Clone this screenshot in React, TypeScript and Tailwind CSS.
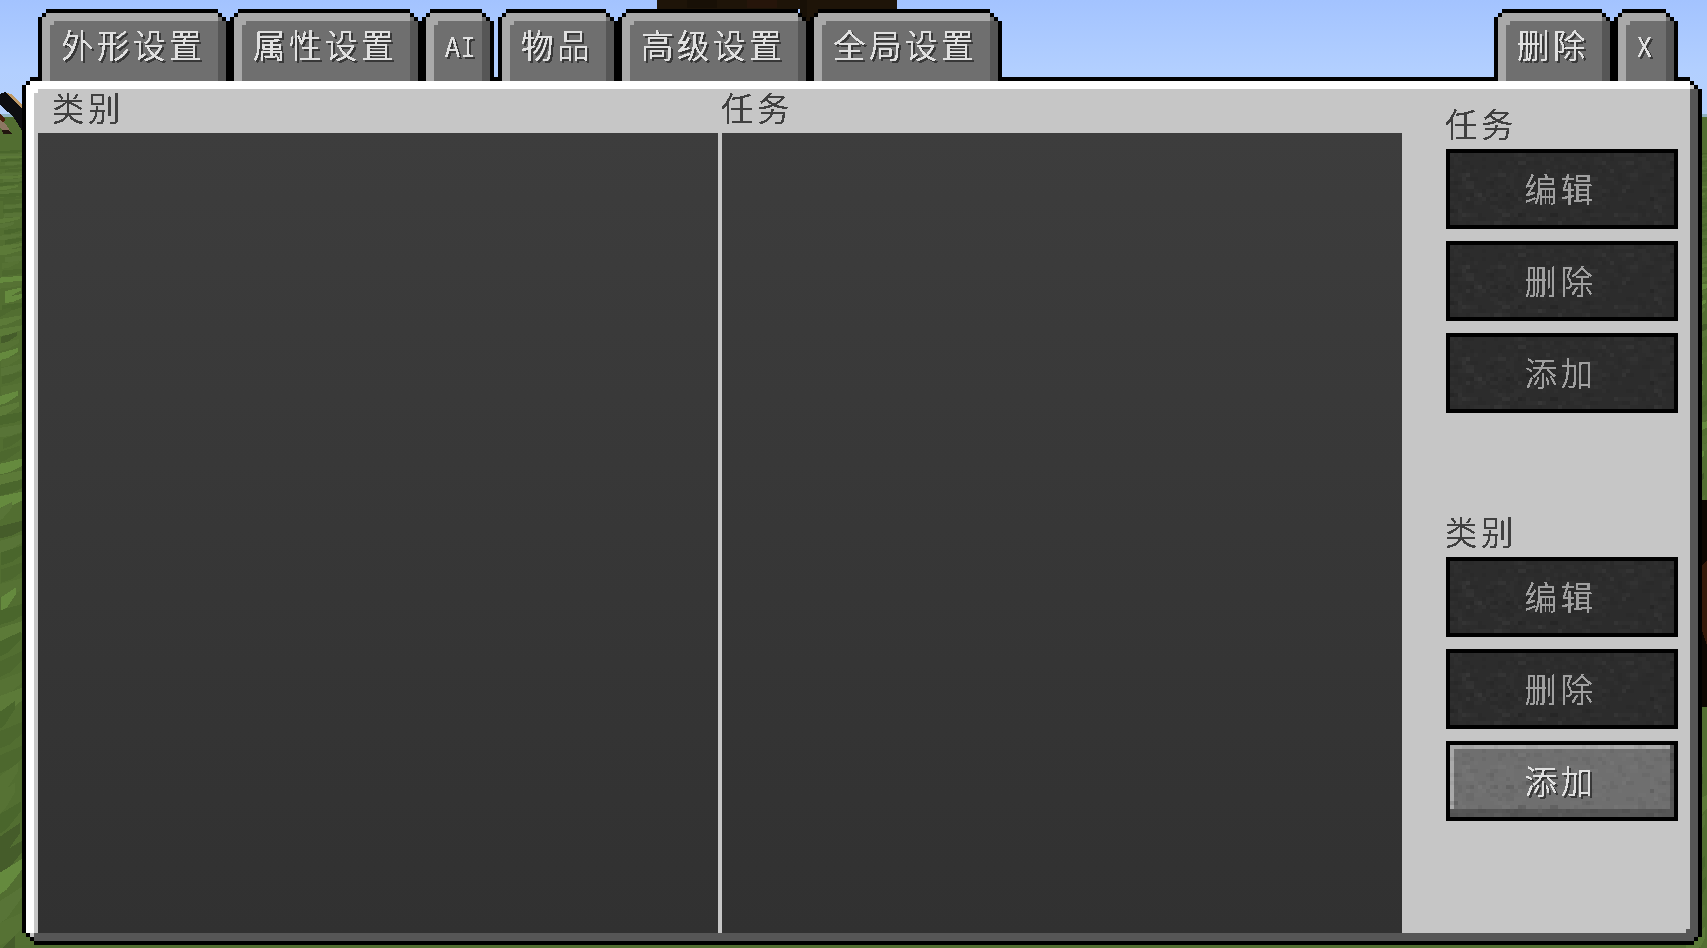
type Rect = { x: number; y: number; w: number; h: number; fill: string };

function createRandom(seed: number) {
  let s = seed;
  return () => {
    s = (s * 1664525 + 1013904223) % 4294967296;
    return s / 4294967296;
  };
}

/* Grass gets coarser and more slanted towards the bottom of the view. */
function grassBlades(x0: number, width: number, seed: number) {
  const rnd = createRandom(seed);
  const tones = ["#4d682e", "#587437", "#4a662c", "#5c7a38", "#455c2a", "#567234", "#658a3e"];
  const blades: { points: string; fill: string }[] = [];
  let y = 150;
  while (y < 960) {
    const t = (y - 116) / 832;
    const h = 1.5 + t * 22;
    const slope = t * 18;
    const left = x0 - 4 + rnd() * width * 0.4 * (1 - t);
    const w = width * (0.5 + rnd() * 0.8);
    const fill = tones[Math.floor(rnd() * (t < 0.15 ? 4 : tones.length))];
    blades.push({
      points: `${left},${y + slope} ${left + w},${y} ${left + w},${y + h * 0.5} ${left + w * 0.4},${y + slope * 0.6 + h} ${left},${y + slope + h}`,
      fill,
    });
    y += h * (0.8 + rnd() * 0.6);
  }
  return blades;
}

const leftGrass = grassBlades(0, 30, 7);
const rightGrass = grassBlades(1690, 20, 19);

const stone: Rect[] = (() => {
  const rnd = createRandom(42);
  const cells: Rect[] = [];
  for (let y = 0; y < 18; y++) {
    for (let x = 0; x < 56; x++) {
      const r = rnd();
      if (r > 0.36) continue;
      const fill = r < 0.01 ? "#00000020" : r < 0.16 ? "#0000000a" : r < 0.34 ? "#ffffff04" : "#ffffff0a";
      cells.push({ x: x * 4, y: y * 4, w: rnd() > 0.5 ? 8 : 4, h: 4, fill });
    }
  }
  return cells;
})();

function World() {
  return (
    <svg
      className="absolute inset-0 h-full w-full"
      viewBox="0 0 1707 948"
      shapeRendering="crispEdges"
      aria-hidden="true"
    >
      <defs>
        <linearGradient id="sky" x1="0" y1="0" x2="0" y2="1">
          <stop offset="0" stopColor="#a3c3ff" />
          <stop offset="0.6" stopColor="#b2cfff" />
          <stop offset="1" stopColor="#b6d1fc" />
        </linearGradient>
        <filter id="crisp" x="-5%" y="-5%" width="110%" height="110%" colorInterpolationFilters="sRGB">
          <feComponentTransfer>
            <feFuncA type="discrete" tableValues="0 0 1 1 1" />
          </feComponentTransfer>
        </filter>
        <filter id="crisp-shadow" x="-5%" y="-5%" width="115%" height="115%" colorInterpolationFilters="sRGB">
          <feComponentTransfer result="text">
            <feFuncA type="discrete" tableValues="0 0 1 1 1" />
          </feComponentTransfer>
          <feOffset in="text" dx="2" dy="2" result="moved" />
          <feFlood floodColor="#383838" />
          <feComposite in2="moved" operator="in" result="shadow" />
          <feMerge>
            <feMergeNode in="shadow" />
            <feMergeNode in="text" />
          </feMerge>
        </filter>
      </defs>
      <rect width="1707" height="116" fill="url(#sky)" />
      <rect y="114" width="1707" height="3" fill="#8fb0c0" />
      <rect y="117" width="1707" height="831" fill="#526e31" />
      {leftGrass.map((b, i) => (
        <polygon key={i} points={b.points} fill={b.fill} />
      ))}
      {rightGrass.map((b, i) => (
        <polygon key={i} points={b.points} fill={b.fill} />
      ))}
      <path d="M657 0H897V9H880V22H800V9H657Z" fill="#1e1408" />
      <path d="M687 0H717V8H687ZM800 0H807V18H800Z" fill="#181006" />
      <path d="M747 0H777V8H747Z" fill="#26150a" />
      <path d="M0 94L5 92L12 98L22 107V131L18 124L14 118L8 112L0 105Z" fill="#0d0d10" />
      <path d="M6 93L11 94L22 104V108L16 103Z" fill="#c09a66" />
      <path d="M0 114L5 119L4 124L0 127Z" fill="#4a1e0c" />
      <path d="M0 120L6 124L10 131L3 130L0 128Z" fill="#8d7763" />
      <path d="M2 130H9L12 134H3Z" fill="#22160f" />
      <rect x="1698" y="500" width="9" height="207" fill="#0c0602" />
      <path d="M1702 565L1707 561V645L1702 630Z" fill="#35190a" />
    </svg>
  );
}

function Tab({ label, size, latin = false }: { label: string; size: string; latin?: boolean }) {
  return (
    <button
      className={`${size} h-[72px] shrink-0 bg-black px-1 pt-1 [clip-path:polygon(8px_0,calc(100%-12px)_0,calc(100%-12px)_4px,calc(100%-8px)_4px,calc(100%-8px)_8px,calc(100%-4px)_8px,calc(100%-4px)_12px,100%_12px,100%_100%,0_100%,0_8px,4px_8px,4px_4px,8px_4px)]`}
    >
      <span className="block h-full bg-[#a9a9a9] pt-2 [clip-path:polygon(4px_0,calc(100%-8px)_0,calc(100%-8px)_4px,calc(100%-4px)_4px,calc(100%-4px)_8px,100%_8px,100%_100%,0_100%,0_4px,4px_4px)]">
        <span className="relative flex h-full border-x-8 border-l-[#a9a9a9] border-r-[#565656] bg-[#6f6f6f] pl-[11px]">
          <span className="absolute top-0 left-0 size-1 bg-[#a9a9a9]" />
          <span className="absolute -top-1 -right-2 size-1 -translate-x-1 bg-[#6f6f6f]" />
          <span
            className={
              latin
                ? "origin-left scale-x-85 pt-[13px] font-['Liberation_Mono',monospace] text-[29px] leading-[32px] tracking-[1px] whitespace-nowrap text-[#e0e0e0] [filter:url(#crisp-shadow)]"
                : "pt-[7px] text-[32.5px] leading-[32px] font-[350] tracking-[3.5px] whitespace-nowrap text-[#e0e0e0] [filter:url(#crisp-shadow)]"
            }
          >
            {label}
          </span>
        </span>
      </span>
    </button>
  );
}

function Heading({ children }: { children: string }) {
  return (
    <h2 className="-mt-0.5 -ml-px mb-0.5 h-10 text-[32.5px] leading-[32px] font-[350] tracking-[3.5px] whitespace-nowrap text-[#404040] [filter:url(#crisp)]">
      {children}
    </h2>
  );
}

function StoneTexture() {
  return (
    <svg className="absolute inset-0 h-full w-full" viewBox="0 0 224 72" shapeRendering="crispEdges" aria-hidden="true">
      {stone.map((c, i) => (
        <rect key={i} x={c.x} y={c.y} width={c.w} height={c.h} fill={c.fill} />
      ))}
    </svg>
  );
}

function StoneButton({ label, disabled = false }: { label: string; disabled?: boolean }) {
  return (
    <button
      disabled={disabled}
      className={`relative flex h-20 w-[232px] items-center justify-center border-4 border-black ${
        disabled ? "bg-[#2c2c2c] text-[#a0a0a0]" : "bg-[#6f6f6f] text-[#e0e0e0]"
      }`}
    >
      {!disabled && (
        <span className="absolute inset-0 shadow-[inset_0_-8px_#565656,inset_-4px_0_#565656,inset_4px_4px_#a9a9a9]" />
      )}
      <StoneTexture />
      <span
        className={`relative mr-[3px] mb-0.5 text-[32.5px] leading-[32px] font-[350] tracking-[3.5px] whitespace-nowrap ${
          disabled ? "[filter:url(#crisp)]" : "[filter:url(#crisp-shadow)]"
        }`}
      >
        {label}
      </span>
    </button>
  );
}

function ActionGroup({ title, canAdd = false }: { title: string; canAdd?: boolean }) {
  return (
    <section className="flow-root h-[408px]">
      <Heading>{title}</Heading>
      <div className="flex flex-col gap-3">
        <StoneButton label="编辑" disabled />
        <StoneButton label="删除" disabled />
        <StoneButton label="添加" disabled={!canAdd} />
      </div>
    </section>
  );
}

function ListColumn({ title, inset }: { title: string; inset: string }) {
  return (
    <section className="w-[680px]">
      <div className={`h-11 pt-1 ${inset}`}>
        <Heading>{title}</Heading>
      </div>
      <div className="h-[800px] bg-linear-to-b from-[#3d3d3d] to-[#313131]" />
    </section>
  );
}

function Panel() {
  return (
    <main className="-mt-1 ml-[22px] h-[868px] w-[1680px] bg-black p-1 [clip-path:polygon(8px_0,calc(100%-12px)_0,calc(100%-12px)_4px,calc(100%-8px)_4px,calc(100%-8px)_8px,calc(100%-4px)_8px,calc(100%-4px)_12px,100%_12px,100%_calc(100%-8px),calc(100%-4px)_calc(100%-8px),calc(100%-4px)_calc(100%-4px),calc(100%-8px)_calc(100%-4px),calc(100%-8px)_100%,12px_100%,12px_calc(100%-4px),8px_calc(100%-4px),8px_calc(100%-8px),4px_calc(100%-8px),4px_calc(100%-12px),0_calc(100%-12px),0_8px,4px_8px,4px_4px,8px_4px)]">
      <div className="relative h-[860px] bg-[#c6c6c6] px-2 pt-2 pb-2 shadow-[inset_8px_8px_#fff] [clip-path:polygon(4px_0,calc(100%-8px)_0,calc(100%-8px)_4px,calc(100%-4px)_4px,calc(100%-4px)_8px,100%_8px,100%_calc(100%-4px),calc(100%-4px)_calc(100%-4px),calc(100%-4px)_100%,8px_100%,8px_calc(100%-4px),4px_calc(100%-4px),4px_calc(100%-8px),0_calc(100%-8px),0_4px,4px_4px)]">
        <span className="absolute top-2 right-0 bottom-0 w-2 bg-[#565656]" />
        <span className="absolute right-0 bottom-0 left-2 h-2 bg-[#565656]" />
        <span className="absolute bottom-0 left-1 h-2 w-1 bg-[#c6c6c6]" />
        <span className="absolute right-2 bottom-2 size-1 bg-[#565656]" />
        <span className="absolute top-2 left-2 size-1 bg-white" />
        <span className="absolute top-1 right-1 size-1 bg-[#c6c6c6]" />
        <div className="flex pl-1">
          <div className="flex gap-1">
            <ListColumn title="类别" inset="pl-[15px]" />
            <ListColumn title="任务" inset="pl-0" />
          </div>
          <aside className="ml-11 pt-5">
            <ActionGroup title="任务" />
            <ActionGroup title="类别" canAdd />
          </aside>
        </div>
      </div>
    </main>
  );
}

export default function App() {
  return (
    <div className="relative h-[948px] w-[1707px] overflow-hidden bg-[#526e31] font-['Noto_Sans_CJK_SC',sans-serif]">
      <World />
      <div className="relative">
        <nav className="relative z-10 flex justify-between pt-[9px] pr-[29px] pl-[38px]">
          <div className="flex">
            <Tab label="外形设置" size="w-48" />
            <Tab label="属性设置" size="w-48" />
            <Tab label="AI" size="w-[72px] mr-1" latin />
            <Tab label="物品" size="w-[120px]" />
            <Tab label="高级设置" size="w-48" />
            <Tab label="全局设置" size="w-48" />
          </div>
          <div className="flex">
            <Tab label="删除" size="w-[120px]" />
            <Tab label="X" size="w-16" latin />
          </div>
        </nav>
        <Panel />
      </div>
    </div>
  );
}
